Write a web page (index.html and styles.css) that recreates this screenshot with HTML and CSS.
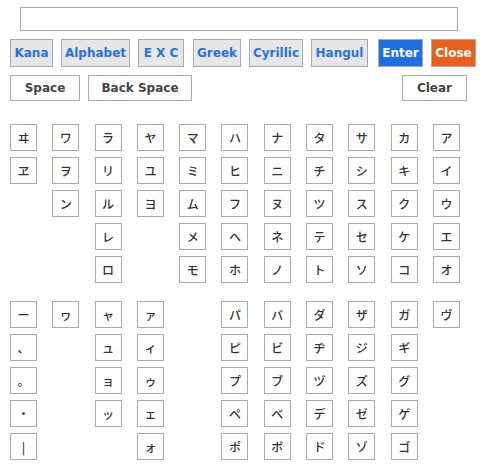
FILE: index.html
```html
<!DOCTYPE html>
<html lang="ja">
<head>
<meta charset="utf-8">
<link rel="stylesheet" href="styles.css">
</head>
<body>
<div class="wrap">
  <div class="input"></div>
  <div class="tabs">
    <button class="tab w-kana">Kana</button>
    <button class="tab w-alpha">Alphabet</button>
    <button class="tab w-exc">E X C</button>
    <button class="tab w-greek">Greek</button>
    <button class="tab w-cyr">Cyrillic</button>
    <button class="tab w-hangul">Hangul</button>
    <button class="tab enter">Enter</button>
    <button class="tab close">Close</button>
  </div>
  <div class="actions">
    <button class="act w-space">Space</button>
    <button class="act w-back">Back Space</button>
    <button class="act w-clear">Clear</button>
  </div>
  <div class="grid">
    <span class="k c1 r1">ヰ</span><span class="k c1 r2">ヱ</span>
    <span class="k c2 r1">ワ</span><span class="k c2 r2">ヲ</span><span class="k c2 r3">ン</span>
    <span class="k c3 r1">ラ</span><span class="k c3 r2">リ</span><span class="k c3 r3">ル</span><span class="k c3 r4">レ</span><span class="k c3 r5">ロ</span>
    <span class="k c4 r1">ヤ</span><span class="k c4 r2">ユ</span><span class="k c4 r3">ヨ</span>
    <span class="k c5 r1">マ</span><span class="k c5 r2">ミ</span><span class="k c5 r3">ム</span><span class="k c5 r4">メ</span><span class="k c5 r5">モ</span>
    <span class="k c6 r1">ハ</span><span class="k c6 r2">ヒ</span><span class="k c6 r3">フ</span><span class="k c6 r4">ヘ</span><span class="k c6 r5">ホ</span>
    <span class="k c7 r1">ナ</span><span class="k c7 r2">ニ</span><span class="k c7 r3">ヌ</span><span class="k c7 r4">ネ</span><span class="k c7 r5">ノ</span>
    <span class="k c8 r1">タ</span><span class="k c8 r2">チ</span><span class="k c8 r3">ツ</span><span class="k c8 r4">テ</span><span class="k c8 r5">ト</span>
    <span class="k c9 r1">サ</span><span class="k c9 r2">シ</span><span class="k c9 r3">ス</span><span class="k c9 r4">セ</span><span class="k c9 r5">ソ</span>
    <span class="k c10 r1">カ</span><span class="k c10 r2">キ</span><span class="k c10 r3">ク</span><span class="k c10 r4">ケ</span><span class="k c10 r5">コ</span>
    <span class="k c11 r1">ア</span><span class="k c11 r2">イ</span><span class="k c11 r3">ウ</span><span class="k c11 r4">エ</span><span class="k c11 r5">オ</span>
  </div>
  <div class="grid second">
    <span class="k c1 r1">ー</span><span class="k c1 r2">、</span><span class="k c1 r3">。</span><span class="k c1 r4">・</span><span class="k c1 r5">|</span>
    <span class="k c2 r1">ヮ</span>
    <span class="k c3 r1">ャ</span><span class="k c3 r2">ュ</span><span class="k c3 r3">ョ</span><span class="k c3 r4">ッ</span>
    <span class="k c4 r1">ァ</span><span class="k c4 r2">ィ</span><span class="k c4 r3">ゥ</span><span class="k c4 r4">ェ</span><span class="k c4 r5">ォ</span>
    <span class="k c6 r1">パ</span><span class="k c6 r2">ピ</span><span class="k c6 r3">プ</span><span class="k c6 r4">ペ</span><span class="k c6 r5">ポ</span>
    <span class="k c7 r1">バ</span><span class="k c7 r2">ビ</span><span class="k c7 r3">ブ</span><span class="k c7 r4">ベ</span><span class="k c7 r5">ボ</span>
    <span class="k c8 r1">ダ</span><span class="k c8 r2">ヂ</span><span class="k c8 r3">ヅ</span><span class="k c8 r4">デ</span><span class="k c8 r5">ド</span>
    <span class="k c9 r1">ザ</span><span class="k c9 r2">ジ</span><span class="k c9 r3">ズ</span><span class="k c9 r4">ゼ</span><span class="k c9 r5">ゾ</span>
    <span class="k c10 r1">ガ</span><span class="k c10 r2">ギ</span><span class="k c10 r3">グ</span><span class="k c10 r4">ゲ</span><span class="k c10 r5">ゴ</span>
    <span class="k c11 r1">ヴ</span>
  </div>
</div>
</body>
</html>
```

FILE: styles.css
```css
html, body {
  margin: 0;
  padding: 0;
  background: #fff;
}
body {
  font-family: "DejaVu Sans", "Noto Sans CJK JP", sans-serif;
  color: #333;
}
.wrap {
  padding: 7px 0 0 10px;
}
.input {
  margin-left: 10px;
  width: 438px;
  height: 24px;
  box-sizing: border-box;
  border: 1px solid #aaa;
}
.tabs {
  display: flex;
  margin-top: 8px;
  gap: 8px;
}
button {
  font-family: "DejaVu Sans", sans-serif;
  font-weight: bold;
  margin: 0;
  padding: 0;
  box-sizing: border-box;
  border: 1px solid #aaa;
  border-radius: 0;
  cursor: pointer;
}
.tab {
  height: 28px;
  background: #e6e6e6;
  color: #2673e0;
  font-size: 12px;
}
.w-kana { width: 43px; }
.w-alpha { width: 69px; }
.w-exc { width: 46px; margin-left: 0; }
.w-greek { width: 48px; margin-left: 1px; }
.w-cyr { width: 54px; }
.w-hangul { width: 57px; }
.enter { width: 45px; margin-left: 2px; background: #1f6fe0; color: #fff; }
.close { width: 45px; background: #e8601c; color: #fff; }
.actions {
  display: flex;
  gap: 8px;
  margin-top: 8px;
  width: 457px;
}
.act {
  height: 26px;
  background: #fff;
  color: #444;
  font-size: 12px;
}
.w-space { width: 70px; }
.w-back { width: 104px; }
.w-clear { width: 65px; margin-left: auto; }
.grid {
  display: grid;
  width: 450px;
  grid-template-columns: repeat(11, 27px);
  grid-template-rows: repeat(5, 27px);
  justify-content: space-between;
  row-gap: 6px;
  margin-top: 23px;
}
.grid.second {
  margin-top: 18px;
}
.k {
  box-sizing: border-box;
  border: 1px solid #aaa;
  display: flex;
  align-items: center;
  justify-content: center;
  font-family: "Noto Sans CJK JP", sans-serif;
  font-size: 12px;
  font-weight: 500;
  color: #333;
}
.c1 { grid-column: 1; } .c2 { grid-column: 2; } .c3 { grid-column: 3; }
.c4 { grid-column: 4; } .c5 { grid-column: 5; } .c6 { grid-column: 6; }
.c7 { grid-column: 7; } .c8 { grid-column: 8; } .c9 { grid-column: 9; }
.c10 { grid-column: 10; } .c11 { grid-column: 11; }
.r1 { grid-row: 1; } .r2 { grid-row: 2; } .r3 { grid-row: 3; }
.r4 { grid-row: 4; } .r5 { grid-row: 5; }
```
